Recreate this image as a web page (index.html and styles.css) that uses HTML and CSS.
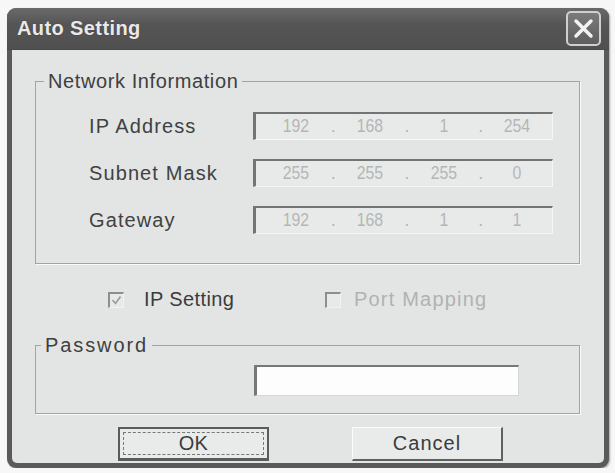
FILE: index.html
```html
<!doctype html>
<html lang="en">
  <head>
    <meta charset="utf-8" />
    <title>Auto Setting</title>
    <link rel="stylesheet" href="styles.css">
  </head>
  <body>
    <div class="window">
      <div class="titlebar">
        <span class="title">Auto Setting</span>
        <button class="close" title="Close">
          <svg width="21" height="21" viewBox="0 0 21 21">
            <path d="M3 3 L18 18 M18 3 L3 18" stroke="#f2f2f2" stroke-width="3.5" stroke-linecap="round" />
          </svg>
        </button>
      </div>

      <div class="client">
        <fieldset class="group network">
          <legend>Network Information</legend>
          <div class="ip-grid">
            <span class="ip-label">IP Address</span>
            <div class="ip-field">
              <span class="octet">192</span><span class="dot">.</span>
              <span class="octet">168</span><span class="dot">.</span>
              <span class="octet">1</span><span class="dot">.</span>
              <span class="octet">254</span>
            </div>

            <span class="ip-label">Subnet Mask</span>
            <div class="ip-field">
              <span class="octet">255</span><span class="dot">.</span>
              <span class="octet">255</span><span class="dot">.</span>
              <span class="octet">255</span><span class="dot">.</span>
              <span class="octet">0</span>
            </div>

            <span class="ip-label">Gateway</span>
            <div class="ip-field">
              <span class="octet">192</span><span class="dot">.</span>
              <span class="octet">168</span><span class="dot">.</span>
              <span class="octet">1</span><span class="dot">.</span>
              <span class="octet">1</span>
            </div>
          </div>
        </fieldset>

        <div class="options">
          <label class="check ip-setting">
            <span class="box checked">
              <svg width="11" height="11" viewBox="0 0 11 11">
                <path d="M1.5 5 L4.5 8.5 L9.5 1.5" fill="none" stroke="#9a9a9a" stroke-width="1.6" />
              </svg>
            </span>
            IP Setting
          </label>
          <label class="check port-mapping disabled">
            <span class="box"></span>
            Port Mapping
          </label>
        </div>

        <fieldset class="group password">
          <legend>Password</legend>
          <div class="pw-row">
            <div class="pw-input"></div>
          </div>
        </fieldset>

        <div class="buttons">
          <button class="btn default"><span class="focus">OK</span></button>
          <button class="btn">Cancel</button>
        </div>
      </div>
    </div>
  </body>
</html>
```

FILE: styles.css
```css
* {
  box-sizing: border-box;
}

body {
  margin: 0;
  background: #f7f7f7;
  font-family: "Liberation Sans", Arial, sans-serif;
  color: #3a3c3c;
}

/* Window frame */
.window {
  margin: 8px 0 0 7px;
  width: 602px;
  height: 460px;
  display: flex;
  flex-direction: column;
  background: #5a5a5a;
  border-radius: 9px;
  box-shadow: 1px 1px 2px rgba(0, 0, 0, 0.35);
  overflow: hidden;
}

.titlebar {
  height: 42px;
  flex: none;
  display: flex;
  align-items: center;
  justify-content: space-between;
  padding: 0 8px 0 10px;
  background: linear-gradient(#6a6a6a, #555 40%, #505050);
  border-bottom: 1px solid #474747;
}

.title {
  font-size: 20px;
  font-weight: bold;
  letter-spacing: 0.4px;
  color: #e9e9e9;
  text-shadow: 0 0 1px #333;
}

.close {
  width: 35px;
  height: 35px;
  padding: 0;
  display: flex;
  align-items: center;
  justify-content: center;
  background: linear-gradient(#7a7a7a, #5e5e5e);
  border: 2px solid #cfcfcf;
  border-radius: 5px;
}

.client {
  flex: 1;
  margin: 0 5px 5px 5px;
  padding: 21px 24px 0 23px;
  display: flex;
  flex-direction: column;
  background: #e3e5e5;
  border-radius: 0 0 5px 5px;
}

/* Group boxes */
.group {
  margin: 0;
  padding: 0;
  border: 1px solid #a2a4a4;
  box-shadow: 1px 1px 0 #fafafa;
}

.group legend {
  margin-left: 8px;
  padding: 0 4px;
  font-size: 20px;
  line-height: 20px;
  letter-spacing: 0.6px;
  color: #3e4040;
}

.password legend {
  margin-left: 5px;
  letter-spacing: 1.9px;
}

.ip-grid {
  display: grid;
  grid-template-columns: 164px 300px;
  grid-auto-rows: 28px;
  row-gap: 19px;
  align-items: center;
  padding: 21px 0 29px 53px;
}

.ip-label {
  font-size: 20px;
  letter-spacing: 1.1px;
  color: #404242;
}

.ip-field {
  height: 28px;
  display: flex;
  align-items: center;
  padding-left: 5px;
  background: #e8eaea;
  border-top: 2px solid #737575;
  border-left: 3px solid #737575;
  border-right: 1px solid #f5f5f5;
  border-bottom: 1px solid #f5f5f5;
  color: #b4b6b6;
  font-size: 18px;
}

.octet {
  width: 70px;
  text-align: center;
  transform: scaleX(0.88);
}

.dot {
  width: 4px;
  text-align: center;
}

/* Checkbox row */
.options {
  height: 71px;
  flex: none;
  display: flex;
  align-items: center;
  padding-left: 73px;
  font-size: 20px;
  letter-spacing: 0.4px;
}

.check {
  display: flex;
  align-items: center;
}

.ip-setting {
  width: 217px;
  gap: 20px;
}

.port-mapping {
  gap: 13px;
  letter-spacing: 1.2px;
}

.disabled {
  color: #b0b2b2;
}

.box {
  width: 16px;
  height: 16px;
  display: flex;
  align-items: center;
  justify-content: center;
  background: #e8eaea;
  border-top: 2px solid #8d8f8f;
  border-left: 2px solid #8d8f8f;
  border-right: 1px solid #f2f2f2;
  border-bottom: 1px solid #f2f2f2;
}

.pw-row {
  padding: 10px 0 17px 218px;
}

.pw-input {
  width: 265px;
  height: 31px;
  background: #fdfdfd;
  border-top: 2px solid #767878;
  border-left: 3px solid #767878;
  border-right: 1px solid #d6d8d8;
  border-bottom: 1px solid #d6d8d8;
}

/* Dialog buttons */
.buttons {
  display: flex;
  gap: 83px;
  padding: 13px 0 0 83px;
}

.btn {
  width: 151px;
  height: 34px;
  padding: 0;
  font-family: inherit;
  font-size: 20px;
  letter-spacing: 1px;
  color: #3a3c3c;
  background: #e9ebeb;
  border-top: 1px solid #fbfbfb;
  border-left: 1px solid #fbfbfb;
  border-right: 2px solid #5f6161;
  border-bottom: 2px solid #5f6161;
}

.btn.default {
  border: 2px solid #5a5c5c;
  border-bottom-width: 3px;
  padding: 3px;
  letter-spacing: 0.4px;
}

.focus {
  display: flex;
  align-items: center;
  justify-content: center;
  height: 100%;
  border: 1px dashed #777;
}
```
